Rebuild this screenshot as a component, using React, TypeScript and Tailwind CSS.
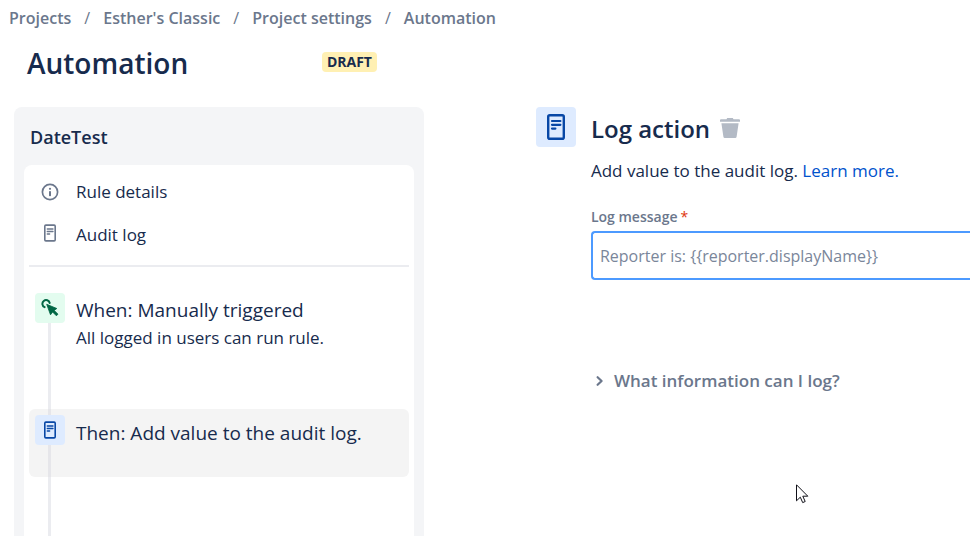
import type { ReactNode } from "react";

const CRUMBS = ["Projects", "Esther's Classic", "Project settings", "Automation"];

export default function App() {
  return (
    <div className="relative flex min-h-screen flex-col overflow-hidden bg-white font-['Open_Sans','Noto_Sans',sans-serif] text-[#172b4d]">
      <nav aria-label="Breadcrumb" className="px-[9px] pt-1.5">
        <ol className="flex items-center whitespace-nowrap text-base leading-6 font-semibold text-[#6b778c]">
          {CRUMBS.map((crumb, i) => (
            <li key={crumb} className="flex">
              {i > 0 && (
                <span className="w-8 text-center font-normal" aria-hidden="true">
                  /
                </span>
              )}
              <a href="#">{crumb}</a>
            </li>
          ))}
        </ol>
      </nav>

      <main className="grid flex-1 grid-cols-[17fr_18fr] gap-x-28 pl-3.5">
        <div className="flex min-w-0 flex-col">
          <header className="flex items-start justify-between pt-[13px] pr-[47px] pl-[13px]">
            <h1 className="text-[28px] leading-10 font-semibold">Automation</h1>
            <span className="mt-[9px] rounded bg-[#fff0b3] px-[5px] text-sm leading-5 font-bold">DRAFT</span>
          </header>
          <RulePanel />
        </div>
        <ActionDetails />
      </main>

      <MousePointer />
    </div>
  );
}

function RulePanel() {
  return (
    <section className="mt-6 flex flex-1 flex-col rounded-t-lg bg-[#f4f5f7] px-2.5">
      <h2 className="px-[6px] pt-4 pb-[14px] text-lg leading-7 font-semibold">DateTest</h2>

      <div className="flex flex-1 flex-col rounded-t-lg bg-white px-[5px]">
        <ul className="pt-[5px] pb-[9px] text-[17px] leading-[43px]">
          <li>
            <a href="#" className="flex items-center">
              <MenuIcon>
                <InfoIcon />
              </MenuIcon>
              Rule details
            </a>
          </li>
          <li>
            <a href="#" className="flex items-center">
              <MenuIcon>
                <LogIcon className="mb-1 h-[18px] w-3 text-[#6b778c]" />
              </MenuIcon>
              Audit log
            </a>
          </li>
        </ul>
        <hr className="border-t-2 border-[#ebecf0]" />

        <ol className="flex flex-1 flex-col pt-[26px]">
          <li className="flex min-h-[116px]">
            <div className="mr-[11px] ml-1.5 flex w-[30px] flex-col">
              <span className="flex size-[30px] items-center justify-center rounded bg-[#e3fcef] text-[#006644]">
                <TriggerIcon />
              </span>
              <Connector />
            </div>
            <div className="pt-[3px]">
              <h3 className="text-[19px] leading-7">When: Manually triggered</h3>
              <p className="text-[17px] leading-[27px]">All logged in users can run rule.</p>
            </div>
          </li>
          <li className="flex min-h-[68px] rounded-md bg-[#f4f4f4]">
            <div className="mr-[11px] ml-1.5 flex w-[30px] flex-col">
              <span className="ml-[13px] h-1.5 w-[3px] bg-[#e6e6ea]" />
              <span className="flex size-[30px] items-center justify-center rounded bg-[#deebff] text-[#0747a6]">
                <LogIcon className="h-[18px] w-3" />
              </span>
              <span className="ml-[13px] w-[3px] flex-1 bg-[#e6e6ea]" />
            </div>
            <h3 className="pt-[10px] text-[19px] leading-7">Then: Add value to the audit log.</h3>
          </li>
          <li aria-hidden="true" className="ml-1.5 flex w-[30px] flex-1 flex-col">
            <Connector />
          </li>
        </ol>
      </div>
    </section>
  );
}

function ActionDetails() {
  return (
    <section className="flex min-w-0 items-start pt-[77px]">
      <span className="flex size-10 shrink-0 items-center justify-center rounded bg-[#deebff] text-[#0747a6]">
        <LogIcon className="h-[26px] w-[18px]" />
      </span>
      <div className="min-w-0 flex-1 pl-[15px]">
        <div className="flex items-center gap-[10px]">
          <h2 className="pt-[2px] text-2xl leading-10 font-semibold">Log action</h2>
          <button type="button" aria-label="Delete action">
            <TrashIcon />
          </button>
        </div>
        <p className="pt-2 text-[17px] leading-7">
          Add value to the audit log.{" "}
          <a href="#" className="text-[#0052cc]">
            Learn more.
          </a>
        </p>

        <label htmlFor="log-message" className="block pt-5 text-sm leading-6 font-semibold text-[#6b778c]">
          Log message
          <span className="pl-[3px] font-normal text-[#de350b]" aria-hidden="true">
            *
          </span>
        </label>
        <input
          id="log-message"
          type="text"
          required
          placeholder="Reporter is: {{reporter.displayName}}"
          className="mt-[2px] block h-[49px] w-full rounded-l border-2 border-r-0 border-[#4c9aff] px-[7px] text-base outline-none placeholder:text-[#7a869a]"
        />

        <button
          type="button"
          aria-expanded="false"
          className="mt-[87px] flex items-center gap-[10px] pl-1 text-[17px] leading-7 font-semibold text-[#6b778c]"
        >
          <svg viewBox="0 0 9 12" className="h-3 w-[9px]" fill="none" stroke="currentColor" strokeWidth="2.2" aria-hidden="true">
            <path d="M2.6 2.2 6.6 6l-4 3.8" strokeLinecap="round" strokeLinejoin="round" />
          </svg>
          What information can I log?
        </button>
      </div>
    </section>
  );
}

function MenuIcon({ children }: { children: ReactNode }) {
  return <span className="mr-[11px] ml-1.5 flex w-[30px] justify-center">{children}</span>;
}

function Connector() {
  return <span className="ml-[13px] w-[3px] flex-1 bg-[#ebecf0]" />;
}

function InfoIcon() {
  return (
    <svg viewBox="0 0 18 18" className="size-[18px] text-[#6b778c]" aria-hidden="true">
      <circle cx="9" cy="9" r="7.6" fill="none" stroke="currentColor" strokeWidth="1.7" />
      <circle cx="9" cy="5.8" r="1.1" fill="currentColor" />
      <rect x="8" y="8" width="2" height="5.2" rx="0.8" fill="currentColor" />
    </svg>
  );
}

function LogIcon({ className }: { className: string }) {
  return (
    <svg viewBox="0 0 18 26" className={className} fill="none" stroke="currentColor" aria-hidden="true">
      <rect x="1.2" y="1.2" width="15.6" height="23.6" rx="1.6" strokeWidth="2.4" />
      <path d="M5 7h8.4M5 10.8h8.4M5 14.6h3.4" strokeWidth="2.2" strokeLinecap="round" />
    </svg>
  );
}

function TriggerIcon() {
  return (
    <svg viewBox="0 0 18 18" className="size-[18px]" aria-hidden="true">
      <path d="M3.6 8.2A3.7 3.7 0 1 1 8.7 4" fill="none" stroke="currentColor" strokeWidth="2" strokeLinecap="round" />
      <path
        d="M5.7 5.3 15.8 9.5l-2.6 1.9 3.8 3.8-1.6 1.6-3.8-3.8-2.1 2.8Z"
        fill="currentColor"
        stroke="currentColor"
        strokeWidth="0.8"
        strokeLinejoin="round"
      />
    </svg>
  );
}

function TrashIcon() {
  return (
    <svg viewBox="0 0 20 20" className="size-5 text-[#b3bac5]" fill="currentColor" aria-hidden="true">
      <path d="M1 1.2h5.5L7.2 0h5.6l.7 1.2H19a1 1 0 0 1 1 1v1.6H0V2.2a1 1 0 0 1 1-1Z" />
      <path d="M1.4 5.2h17.2l-2 13.6a1.4 1.4 0 0 1-1.4 1.2H4.8a1.4 1.4 0 0 1-1.4-1.2Z" />
    </svg>
  );
}

function MousePointer() {
  return (
    <svg
      viewBox="0 0 13 20"
      className="pointer-events-none absolute top-[484px] left-[796px] h-5 w-[13px]"
      fill="white"
      stroke="#101018"
      aria-hidden="true"
    >
      <path d="M.5.8v16l3.8-3.6 2.4 5.4 2.5-1.1-2.4-5.3h5Z" />
    </svg>
  );
}
